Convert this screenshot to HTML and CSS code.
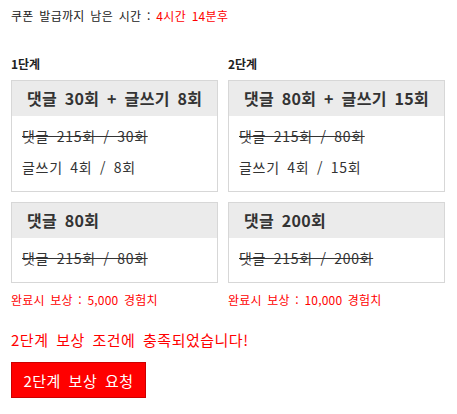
FILE: index.html
```html
<!DOCTYPE html>
<html lang="ko">
<head>
<meta charset="utf-8">
<link rel="stylesheet" href="styles.css">
</head>
<body>
<div class="page">
  <p class="timer">쿠폰 발급까지 남은 시간 : <span class="red">4시간 14분후</span></p>
  <div class="stages">
    <div class="stage stage1">
      <h3 class="stage-title">1단계</h3>
      <div class="box">
        <div class="box-head">댓글 30회 + 글쓰기 8회</div>
        <div class="box-body">
          <p class="line done">댓글 215회 / 30회</p>
          <p class="line">글쓰기 4회 / 8회</p>
        </div>
      </div>
      <div class="box">
        <div class="box-head">댓글 80회</div>
        <div class="box-body">
          <p class="line done">댓글 215회 / 80회</p>
        </div>
      </div>
      <p class="reward">완료시 보상 : 5,000 경험치</p>
    </div>
    <div class="stage stage2">
      <h3 class="stage-title">2단계</h3>
      <div class="box">
        <div class="box-head">댓글 80회 + 글쓰기 15회</div>
        <div class="box-body">
          <p class="line done">댓글 215회 / 80회</p>
          <p class="line">글쓰기 4회 / 15회</p>
        </div>
      </div>
      <div class="box">
        <div class="box-head">댓글 200회</div>
        <div class="box-body">
          <p class="line done">댓글 215회 / 200회</p>
        </div>
      </div>
      <p class="reward">완료시 보상 : 10,000 경험치</p>
    </div>
  </div>
  <p class="notice">2단계 보상 조건에 충족되었습니다!</p>
  <button class="claim" type="button">2단계 보상 요청</button>
</div>
</body>
</html>
```
FILE: styles.css
```css
* { box-sizing: border-box; }
html, body { margin: 0; padding: 0; background: #fff; }
body {
  font-family: "Noto Sans CJK KR", "Liberation Sans", sans-serif;
  color: #333;
  font-size: 12px;
}
.page { padding: 7px 11px 0 11px; }
.timer { margin: 0; height: 18px; line-height: 18px; font-size: 12px; color: #222; word-spacing: 2px; letter-spacing: 0.3px; }
.red { color: #f00; }
.stages { display: flex; margin-top: 31px; }
.stage { display: flex; flex-direction: column; }
.stage1 { width: 207px; margin-right: 10px; }
.stage2 { width: 217px; }
.stage-title { margin: 0; height: 24px; line-height: 16px; font-size: 12px; font-weight: bold; color: #222; }
.box { border: 1px solid #d7d7d7; margin-bottom: 10px; }
.box-head {
  background: #ebebeb;
  height: 35px;
  line-height: 35px;
  padding-left: 15px;
  font-size: 16px;
  font-weight: bold;
  color: #333;
  word-spacing: 3px;
  letter-spacing: 0.3px;
  white-space: nowrap;
}
.box-body { padding: 5px 10px 8px 10px; }
.line { margin: 0; height: 31px; line-height: 31px; font-size: 14px; color: #333; word-spacing: 3px; letter-spacing: 0.7px; white-space: nowrap; }
.done { text-decoration: line-through; }
.reward { margin: -2px 0 0 0; height: 18px; line-height: 18px; font-size: 12px; color: #f00; word-spacing: 2px; letter-spacing: 0.2px; }
.notice { margin: 20px 0 0 0; height: 22px; line-height: 22px; font-size: 15px; color: #f00; word-spacing: 3px; letter-spacing: 0.5px; }
.claim {
  margin-top: 11px;
  width: 135px;
  height: 36px;
  background: #f00;
  border: 1px solid #c00;
  color: #fff;
  font-family: inherit;
  font-size: 15px;
  padding: 0;
  word-spacing: 3px;
  letter-spacing: 0.5px;
  cursor: pointer;
}
```
